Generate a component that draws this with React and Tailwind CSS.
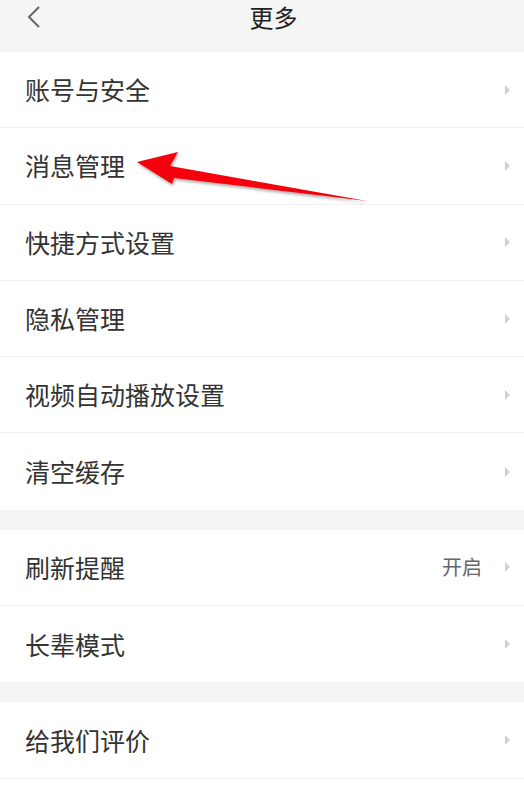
import React from "react";

const font = { fontFamily: '"Noto Sans CJK SC", "Noto Sans", sans-serif' };

function Tri() {
  return (
    <svg width="7" height="12" viewBox="0 0 7 12" className="shrink-0">
      <path d="M1 1 L6 6 L1 11 Z" fill="#d0d0d0" />
    </svg>
  );
}

function Row({ label, value, last }) {
  return (
    <div className={`h-[76.3px] flex items-center bg-white pl-[25px] pr-[13px] ${last ? "" : "border-b border-[#f2f2f2]"}`}>
      <span className="text-[25px] text-[#333333] leading-none flex-1">{label}</span>
      {value && <span className="text-[20px] text-[#666666] mr-[22px] leading-none">{value}</span>}
      <Tri />
    </div>
  );
}

export default function App() {
  return (
    <div className="relative w-[524px] h-[802px] bg-white overflow-hidden" style={font}>
      <div className="h-[52px] bg-[#f5f5f5] relative flex justify-center pl-[23px]">
        <svg className="absolute left-[26px] top-[5px]" width="16" height="24" viewBox="0 0 16 24">
          <path d="M13 2 L3 12 L13 22" fill="none" stroke="#666" strokeWidth="2" />
        </svg>
        <span className="text-[24px] text-[#222] leading-none mt-[5px]">更多</span>
      </div>
      <Row label="账号与安全" />
      <Row label="消息管理" />
      <Row label="快捷方式设置" />
      <Row label="隐私管理" />
      <Row label="视频自动播放设置" />
      <Row label="清空缓存" last />
      <div className="h-[20px] bg-[#f5f5f5]" />
      <Row label="刷新提醒" value="开启" />
      <Row label="长辈模式" last />
      <div className="h-[20px] bg-[#f5f5f5]" />
      <Row label="给我们评价" />
      <svg className="absolute left-0 top-0 pointer-events-none" width="524" height="802">
        <defs>
          <filter id="sh" x="-10%" y="-50%" width="120%" height="200%">
            <feDropShadow dx="1" dy="2" stdDeviation="1.5" floodColor="#000" floodOpacity="0.35" />
          </filter>
        </defs>
        <path d="M137 162 L178 152 L170 166 L367 201 L174 178 L172 184 Z" fill="#f5050a" filter="url(#sh)" />
      </svg>
    </div>
  );
}
